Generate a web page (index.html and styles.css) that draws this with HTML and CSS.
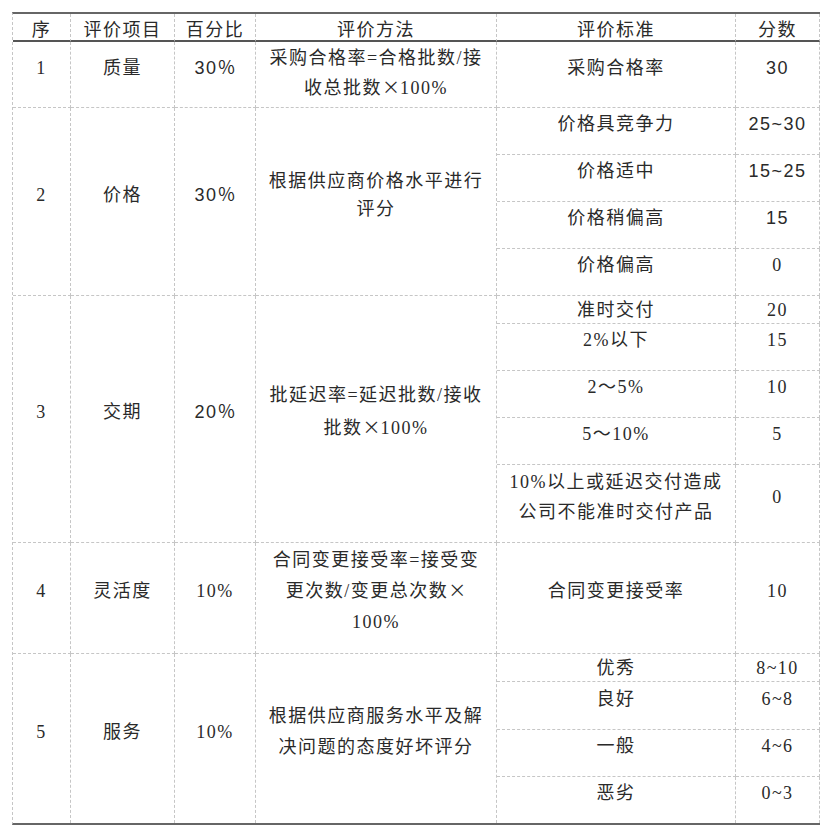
FILE: index.html
```html
<!DOCTYPE html>
<html lang="zh-CN">
<head>
<meta charset="utf-8">
<title>供应商评价表</title>
<link rel="stylesheet" href="styles.css">
</head>
<body>
<div class="page">
<table class="grid">
  <colgroup>
    <col class="c-no">
    <col class="c-item">
    <col class="c-pct">
    <col class="c-method">
    <col class="c-std">
    <col class="c-score">
  </colgroup>
  <thead>
    <tr>
      <th>序</th><th>评价项目</th><th>百分比</th><th>评价方法</th><th>评价标准</th><th>分数</th>
    </tr>
  </thead>
  <tbody>
    <tr class="r-66">
      <td>1</td><td>质量</td><td class="sans">30<span class="cjk">％</span></td>
      <td class="method m-first">采购合格率=合格批数/接<br>收总批数<span class="cjk">×</span>100%</td>
      <td>采购合格率</td><td class="sans">30</td>
    </tr>

    <tr class="r-47">
      <td rowspan="4">2</td><td rowspan="4">价格</td><td rowspan="4" class="sans">30<span class="cjk">％</span></td>
      <td rowspan="4" class="method lh-28">根据供应商价格水平进行<br>评分</td>
      <td>价格具竞争力</td><td class="sans">25~30</td>
    </tr>
    <tr class="r-47"><td>价格适中</td><td class="sans">15~25</td></tr>
    <tr class="r-47"><td>价格稍偏高</td><td class="sans">15</td></tr>
    <tr class="r-46"><td>价格偏高</td><td>0</td></tr>

    <tr class="r-short">
      <td rowspan="5">3</td><td rowspan="5">交期</td><td rowspan="5" class="sans">20<span class="cjk">％</span></td>
      <td rowspan="5" class="method lh-33">批延迟率=延迟批数/接收<br>批数<span class="cjk">×</span>100%</td>
      <td class="short">准时交付</td><td class="short">20</td>
    </tr>
    <tr class="r-47"><td>2%以下</td><td>15</td></tr>
    <tr class="r-47"><td>2～5%</td><td>10</td></tr>
    <tr class="r-47"><td>5～10%</td><td>5</td></tr>
    <tr class="r-78"><td>10%以上或延迟交付造成<br>公司不能准时交付产品</td><td>0</td></tr>

    <tr class="r-111">
      <td>4</td><td>灵活度</td><td>10%</td>
      <td class="method lh-31">合同变更接受率=接受变<br>更次数/变更总次数<span class="cjk">×</span><br>100%</td>
      <td>合同变更接受率</td><td>10</td>
    </tr>

    <tr class="r-short">
      <td rowspan="4" class="end">5</td><td rowspan="4" class="end">服务</td><td rowspan="4" class="end">10%</td>
      <td rowspan="4" class="method lh-31 end">根据供应商服务水平及解<br>决问题的态度好坏评分</td>
      <td class="short">优秀</td><td class="short">8~10</td>
    </tr>
    <tr class="r-48"><td>良好</td><td>6~8</td></tr>
    <tr class="r-47"><td>一般</td><td>4~6</td></tr>
    <tr class="r-46"><td class="end">恶劣</td><td class="end">0~3</td></tr>
  </tbody>
</table>
</div>
</body>
</html>
```
FILE: styles.css
```css
html, body {
  margin: 0;
  padding: 0;
  background: #ffffff;
}

.page {
  padding: 12px 0 0 12px;
}

.grid {
  border-collapse: separate;
  border-spacing: 0;
  table-layout: fixed;
  width: 808px;
  border-top: 2px solid #666666;
  border-bottom: 2px solid #666666;
  border-left: 1px dashed #c6c6c6;
  font-family: "Liberation Serif", "Noto Sans CJK SC", serif;
  font-size: 18px;
  line-height: 30px;
  letter-spacing: 1.5px;
  color: #2a2a2a;
}

.c-no { width: 58px; }
.c-item { width: 104px; }
.c-pct { width: 81px; }
.c-method { width: 241px; }
.c-std { width: 239px; }
.c-score { width: 84px; }

.grid th,
.grid td {
  padding: 1px 0 15px;
  text-align: center;
  vertical-align: middle;
  border-right: 1px dashed #c6c6c6;
  border-bottom: 1px dashed #c6c6c6;
  font-weight: normal;
  white-space: nowrap;
}

.grid th {
  padding: 6px 0 0;
  line-height: 20px;
  height: 26px;
  box-sizing: border-box;
  border-bottom: 2px solid #555555;
}

.grid .sans {
  font-family: "Liberation Sans", "Noto Sans CJK SC", sans-serif;
}

.grid .cjk {
  font-family: "Noto Sans CJK SC", sans-serif;
  letter-spacing: 0;
  line-height: 1;
}

.grid .method.m-first { padding-bottom: 4px; line-height: 30px; }
.grid .lh-28 { line-height: 28px; }
.grid .lh-31 { line-height: 31px; }
.grid .lh-33 { line-height: 33px; }

.grid td.short {
  padding: 2px 0 0;
  line-height: 25px;
}

.grid td.end { border-bottom: 0; }

.r-short { height: 28px; }
.r-46 { height: 46px; }
.r-47 { height: 47px; }
.r-48 { height: 48px; }
.r-66 { height: 66px; }
.r-78 { height: 78px; }
.r-111 { height: 111px; }
```
